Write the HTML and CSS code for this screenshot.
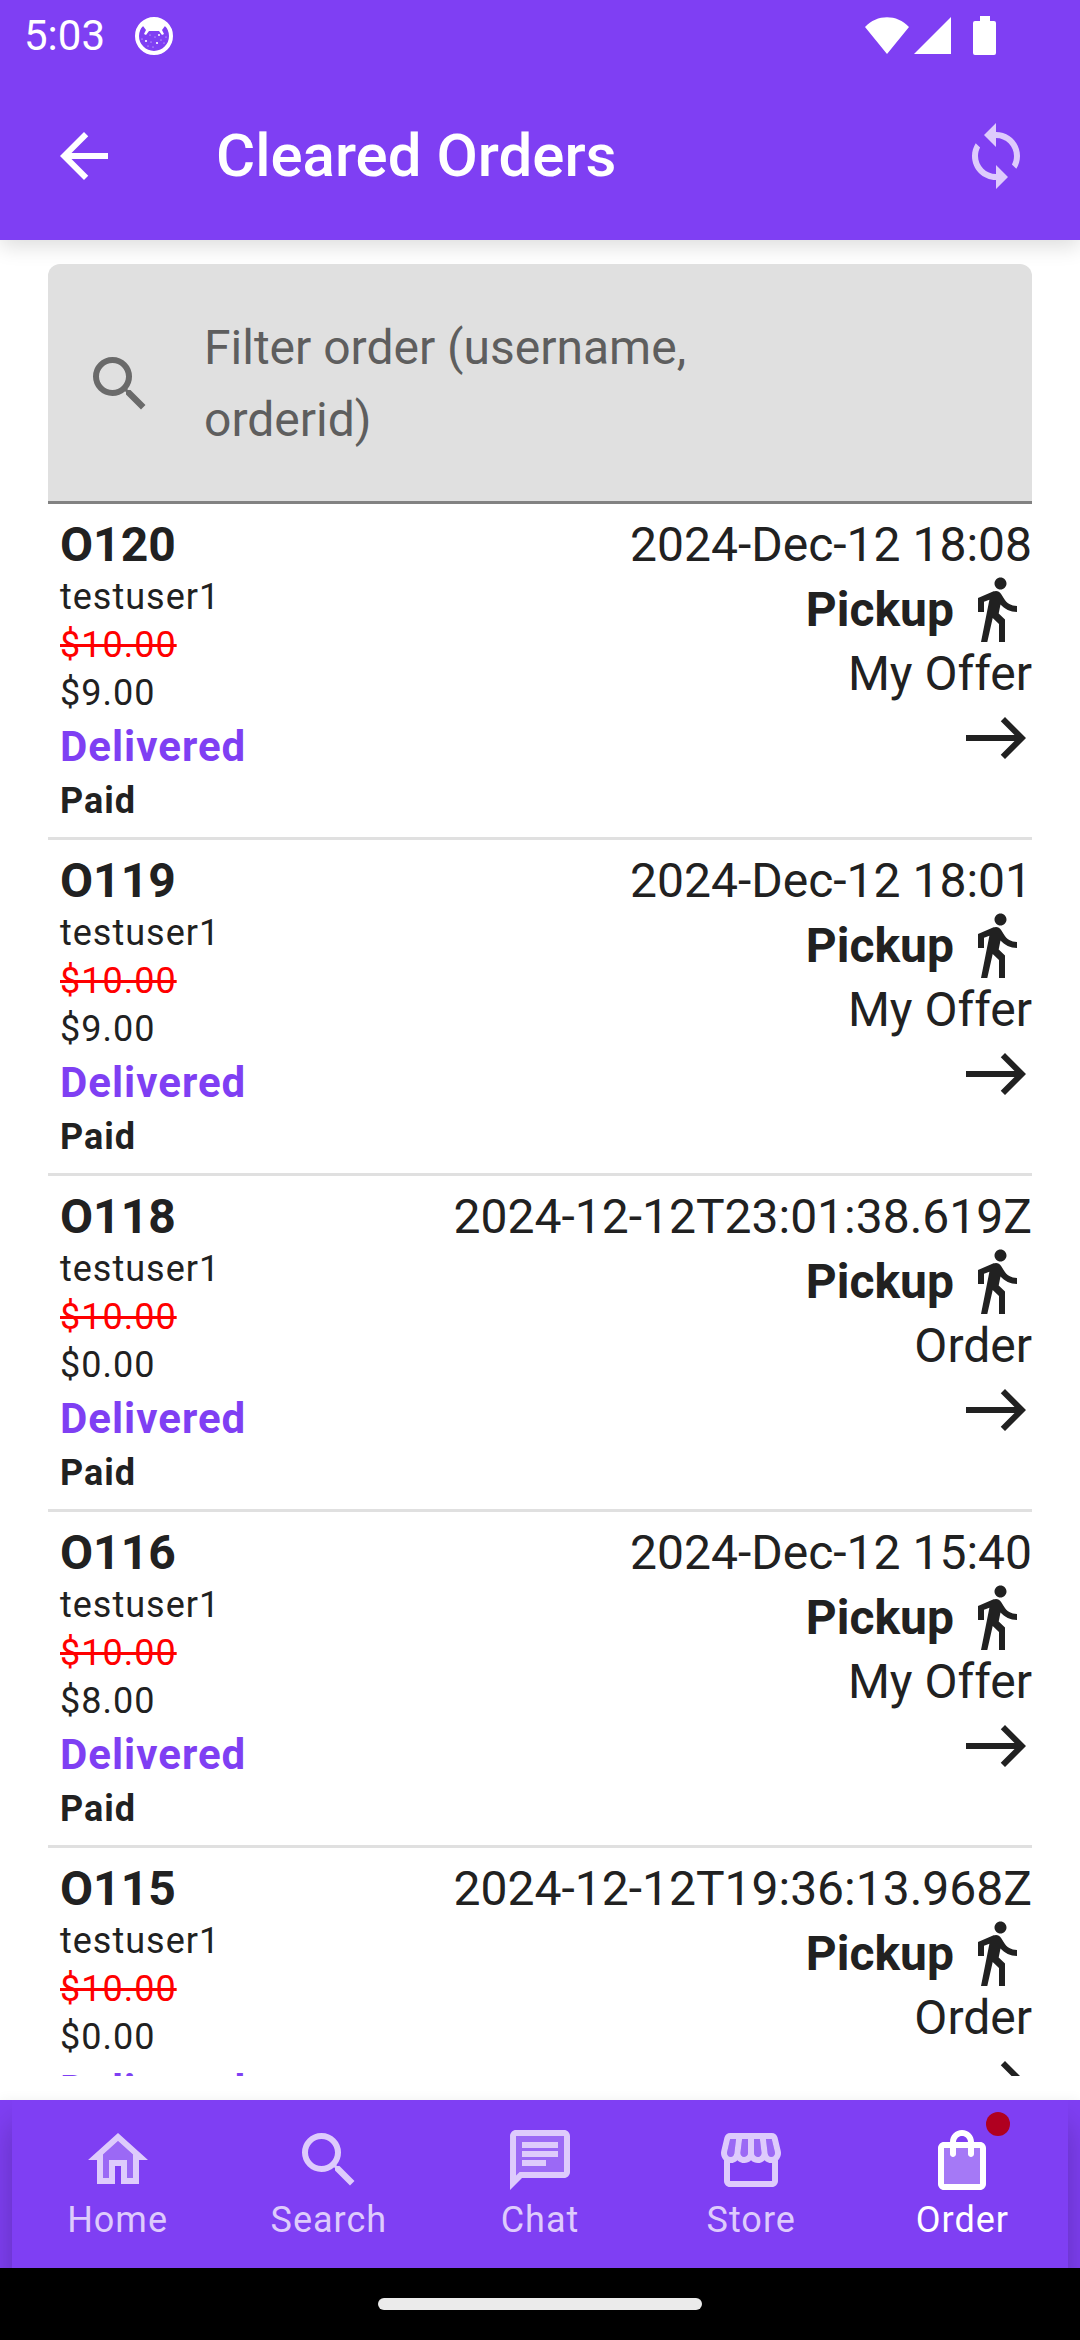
FILE: index.html
```html
<!DOCTYPE html>
<html lang="en">
<head>
<meta charset="utf-8">
<meta name="viewport" content="width=device-width">
<title>Cleared Orders</title>
<link rel="stylesheet" href="styles.css">
</head>
<body>
<svg class="sprite" aria-hidden="true">
  <symbol id="walk" viewBox="0 0 24 24"><path d="M13.5 5.5c1.1 0 2-.9 2-2s-.9-2-2-2-2 .9-2 2 .9 2 2 2zM9.8 8.9L7 23h2.1l1.8-8 2.1 2v6h2v-7.5l-2.1-2 .6-3C14.8 12 16.8 13 19 13v-2c-1.9 0-3.5-1-4.3-2.4l-1-1.6c-.4-.6-1-1-1.7-1-.3 0-.5.1-.8.1L6 8.3V13h2V9.6l1.8-.7"/></symbol>
  <symbol id="east" viewBox="0 0 24 24"><path d="M15 5l-1.41 1.41L18.17 11H2v2h16.17l-4.59 4.59L15 19l7-7-7-7z"/></symbol>
  <symbol id="search" viewBox="0 0 24 24"><path d="M15.5 14h-.79l-.28-.27A6.471 6.471 0 0 0 16 9.5 6.5 6.5 0 1 0 9.5 16c1.61 0 3.09-.59 4.23-1.57l.27.28v.79l5 4.99L20.49 19l-4.99-5zm-6 0C7.01 14 5 11.99 5 9.5S7.01 5 9.5 5 14 7.01 14 9.5 11.99 14 9.5 14z"/></symbol>
</svg>
<div class="app">
  <header class="header">
    <div class="status">
      <span class="clock">5:03</span>
      <svg class="status-icon" viewBox="0 0 38 38" aria-hidden="true">
        <circle cx="19" cy="19" r="17" fill="none" stroke="currentColor" stroke-width="4"/>
        <path d="M4 12l4-3 3 4-2 4 2 1 3-4h10l3 4 2-1-2-4 3-4 4 3C31 5 25 2 19 2S7 5 4 12z"/>
        <g><circle cx="11" cy="24" r="1.1"/><circle cx="24" cy="18" r="1"/><circle cx="22" cy="26" r="1.1"/><circle cx="15" cy="18" r=".5"/><circle cx="16" cy="25" r=".5"/><circle cx="13" cy="29" r=".5"/><circle cx="18" cy="30" r=".5"/><circle cx="26" cy="23" r=".5"/><circle cx="29" cy="26" r=".5"/><circle cx="31" cy="20" r=".5"/><circle cx="7" cy="22" r=".5"/><circle cx="20" cy="20" r=".5"/></g>
      </svg>
      <svg class="signals" viewBox="0 0 132 40" aria-hidden="true">
        <path d="M1 11C13-2 33-2 45 11L23 38zM50 38h37V1zM109 5h7V0h10v5h4q2 0 2 2v30q0 2-2 2h-19q-2 0-2-2V7q0-2 2-2z"/>
      </svg>
    </div>
    <div class="toolbar">
      <button class="icon-button" type="button" aria-label="Back"><svg class="icon" viewBox="0 0 24 24"><path d="M20 11H7.83l5.59-5.59L12 4l-8 8 8 8 1.41-1.41L7.83 13H20v-2z"/></svg></button>
      <h1 class="title">Cleared Orders</h1>
      <button class="icon-button muted" type="button" aria-label="Sync"><svg class="icon" viewBox="0 0 24 24"><path d="M12 4V1L8 5l4 4V6c3.31 0 6 2.69 6 6 0 1.01-.25 1.97-.7 2.8l1.46 1.46C19.54 15.03 20 13.57 20 12c0-4.42-3.58-8-8-8zm0 14c-3.31 0-6-2.69-6-6 0-1.01.25-1.97.7-2.8L5.24 7.74C4.46 8.97 4 10.43 4 12c0 4.42 3.58 8 8 8v3l4-4-4-4v3z"/></svg></button>
    </div>
  </header>

  <main class="main">
    <label class="filter">
      <svg class="icon" role="img" aria-label="Filter"><use href="#search"/></svg>
      <textarea class="filter-input" rows="2" placeholder="Filter order (username, orderid)"></textarea>
    </label>
    <ul class="orders">
      <li class="order">
        <div class="info"><h2 class="number">O120</h2><span class="caption">testuser1</span><del class="caption old-price">$10.00</del><span class="caption">$9.00</span><strong class="state">Delivered</strong><strong class="caption">Paid</strong></div>
        <div class="details"><span class="line">2024-Dec-12 18:08</span><span class="method"><strong>Pickup</strong><svg class="icon"><use href="#walk"/></svg></span><span class="line">My Offer</span><a class="open" href="#o120" aria-label="Open order O120"><svg class="icon"><use href="#east"/></svg></a></div>
      </li>
      <li class="order">
        <div class="info"><h2 class="number">O119</h2><span class="caption">testuser1</span><del class="caption old-price">$10.00</del><span class="caption">$9.00</span><strong class="state">Delivered</strong><strong class="caption">Paid</strong></div>
        <div class="details"><span class="line">2024-Dec-12 18:01</span><span class="method"><strong>Pickup</strong><svg class="icon"><use href="#walk"/></svg></span><span class="line">My Offer</span><a class="open" href="#o119" aria-label="Open order O119"><svg class="icon"><use href="#east"/></svg></a></div>
      </li>
      <li class="order">
        <div class="info"><h2 class="number">O118</h2><span class="caption">testuser1</span><del class="caption old-price">$10.00</del><span class="caption">$0.00</span><strong class="state">Delivered</strong><strong class="caption">Paid</strong></div>
        <div class="details"><span class="line">2024-12-12T23:01:38.619Z</span><span class="method"><strong>Pickup</strong><svg class="icon"><use href="#walk"/></svg></span><span class="line">Order</span><a class="open" href="#o118" aria-label="Open order O118"><svg class="icon"><use href="#east"/></svg></a></div>
      </li>
      <li class="order">
        <div class="info"><h2 class="number">O116</h2><span class="caption">testuser1</span><del class="caption old-price">$10.00</del><span class="caption">$8.00</span><strong class="state">Delivered</strong><strong class="caption">Paid</strong></div>
        <div class="details"><span class="line">2024-Dec-12 15:40</span><span class="method"><strong>Pickup</strong><svg class="icon"><use href="#walk"/></svg></span><span class="line">My Offer</span><a class="open" href="#o116" aria-label="Open order O116"><svg class="icon"><use href="#east"/></svg></a></div>
      </li>
      <li class="order">
        <div class="info"><h2 class="number">O115</h2><span class="caption">testuser1</span><del class="caption old-price">$10.00</del><span class="caption">$0.00</span><strong class="state">Delivered</strong><strong class="caption">Paid</strong></div>
        <div class="details"><span class="line">2024-12-12T19:36:13.968Z</span><span class="method"><strong>Pickup</strong><svg class="icon"><use href="#walk"/></svg></span><span class="line">Order</span><a class="open" href="#o115" aria-label="Open order O115"><svg class="icon"><use href="#east"/></svg></a></div>
      </li>
    </ul>
  </main>

  <nav class="nav">
    <div class="tabs">
      <a class="tab" href="#home"><svg class="icon" viewBox="0 0 24 24"><path opacity=".3" d="M12 5.69l5 4.5V18h-2v-6H9v6H7v-7.81z"/><path d="M12 3L2 12h3v8h6v-6h2v6h6v-8h3L12 3zm5 15h-2v-6H9v6H7v-7.81l5-4.5 5 4.5V18z"/></svg>Home</a>
      <a class="tab" href="#search-tab"><svg class="icon"><use href="#search"/></svg>Search</a>
      <a class="tab" href="#chat"><svg class="icon" viewBox="0 0 24 24"><path opacity=".3" d="M4 17.17L5.17 16H20V4H4v13.17zM6 6h12v2H6V6zm0 3h12v2H6V9zm0 3h8v2H6v-2z" fill-rule="evenodd"/><path d="M20 18c1.1 0 2-.9 2-2V4c0-1.1-.9-2-2-2H4c-1.1 0-1.99.9-1.99 2L2 22l4-4h14zM4 17.17V4h16v12H5.17L4 17.17zM6 12h8v2H6zm0-3h12v2H6zm0-3h12v2H6z" fill-rule="evenodd"/></svg>Chat</a>
      <a class="tab" href="#store"><svg class="icon" viewBox="0 0 24 24"><path opacity=".3" d="M18.91 4.99l1.05 4.37c.1.42.01.84-.25 1.17-.14.18-.44.47-.94.47-.61 0-1.14-.49-1.21-1.14L16.98 5zM13 5h1.96l.54 4.52c.05.39-.07.78-.33 1.07-.22.26-.54.41-.95.41-.67 0-1.22-.59-1.22-1.31zM8.49 9.52L9.04 5H11v4.69c0 .72-.55 1.31-1.29 1.31-.34 0-.65-.15-.89-.41-.25-.29-.37-.68-.33-1.07zM4.04 9.36L5.05 5h1.97l-.58 4.86c-.08.65-.6 1.14-1.21 1.14-.49 0-.8-.29-.93-.47-.27-.32-.36-.75-.26-1.17z"/><path d="M21.9 8.89l-1.05-4.37c-.22-.9-1-1.52-1.91-1.52H5.05c-.9 0-1.69.63-1.9 1.52L2.1 8.89c-.24 1.02-.02 2.06.62 2.88.08.11.19.19.28.29V19c0 1.1.9 2 2 2h14c1.1 0 2-.9 2-2v-6.94c.09-.09.2-.18.28-.28.64-.82.87-1.87.62-2.89zm-2.99-3.9l1.05 4.37c.1.42.01.84-.25 1.17-.14.18-.44.47-.94.47-.61 0-1.14-.49-1.21-1.14L16.98 5l1.93-.01zM13 5h1.96l.54 4.52c.05.39-.07.78-.33 1.07-.22.26-.54.41-.95.41-.67 0-1.22-.59-1.22-1.31V5zM8.49 9.52L9.04 5H11v4.69c0 .72-.55 1.31-1.29 1.31-.34 0-.65-.15-.89-.41-.25-.29-.37-.68-.33-1.07zm-4.45-.16L5.05 5h1.97l-.58 4.86c-.08.65-.6 1.14-1.21 1.14-.49 0-.8-.29-.93-.47-.27-.32-.36-.75-.26-1.17zM5 19v-6.03c.08.01.15.03.23.03.87 0 1.66-.36 2.24-.95.6.6 1.4.95 2.31.95.87 0 1.65-.36 2.23-.93.59.57 1.39.93 2.29.93.84 0 1.64-.35 2.24-.95.58.59 1.37.95 2.24.95.08 0 .15-.02.23-.03V19H5z"/></svg>Store</a>
      <a class="tab active" href="#order" aria-current="page"><span class="badged"><svg class="icon" viewBox="0 0 24 24"><path opacity=".3" d="M18 8H6v12h12z"/><path d="M18 6h-2c0-2.21-1.79-4-4-4S8 3.79 8 6H6c-1.1 0-2 .9-2 2v12c0 1.1.9 2 2 2h12c1.1 0 2-.9 2-2V8c0-1.1-.9-2-2-2zm-6-2c1.1 0 2 .9 2 2h-4c0-1.1.9-2 2-2zm6 16H6V8h2v2c0 .55.45 1 1 1s1-.45 1-1V8h4v2c0 .55.45 1 1 1s1-.45 1-1V8h2v12z"/></svg><span class="badge"></span></span>Order</a>
    </div>
  </nav>
  <div class="gesture"><span class="pill"></span></div>
</div>
</body>
</html>
```
FILE: styles.css
```css
* {
  box-sizing: border-box;
}

body {
  margin: 0;
  background: #fff;
  color: #212121;
  font-family: Roboto, "Liberation Sans", sans-serif;
}

svg {
  display: block;
  flex: none;
  fill: currentColor;
}

.sprite {
  display: none;
}

.icon {
  width: 72px;
  height: 72px;
}

.app {
  display: flex;
  flex-direction: column;
  height: 100vh;
}

.header {
  background: #7f3ff3;
  color: #fff;
  box-shadow: 0 6px 20px rgba(0, 0, 0, 0.14);
}

.status {
  display: flex;
  align-items: center;
  height: 72px;
  padding: 0 84px 0 24px;
}

.clock {
  font-size: 42px;
  line-height: 72px;
}

.status-icon {
  width: 38px;
  height: 38px;
  margin-left: 30px;
}

.signals {
  width: 132px;
  height: 40px;
  margin-left: auto;
}

.toolbar {
  display: flex;
  align-items: center;
  height: 168px;
  padding: 0 48px;
}

.icon-button {
  padding: 0;
  border: 0;
  background: none;
  color: inherit;
}

.muted {
  color: #decbfc;
}

.title {
  flex: 1;
  margin: 0;
  padding-left: 96px;
  font-size: 60px;
  line-height: 72px;
  font-weight: 500;
}

.main {
  display: flex;
  flex: 1;
  flex-direction: column;
  min-height: 0;
  padding: 24px 48px;
}

.filter {
  display: flex;
  flex: none;
  align-items: center;
  gap: 48px;
  padding: 48px 204px 45px 36px;
  border-bottom: 3px solid #828282;
  border-radius: 12px 12px 0 0;
  background: #e0e0e0;
  color: #6a6a6a;
}

.filter-input {
  flex: 1;
  min-width: 0;
  padding: 0;
  border: 0;
  outline: 0;
  background: none;
  color: #212121;
  font: 48px/72px Roboto, "Liberation Sans", sans-serif;
  resize: none;
  overflow: hidden;
}

.filter-input::placeholder {
  color: #5e5e5e;
}

.orders {
  flex: 1;
  min-height: 0;
  margin: 0;
  padding: 0;
  overflow-y: auto;
  list-style: none;
  scrollbar-width: none;
}

.order {
  display: flex;
  justify-content: space-between;
  padding: 12px 0 12px 12px;
  border-bottom: 3px solid #e0e0e0;
}

.info,
.details {
  display: flex;
  flex-direction: column;
  align-items: flex-start;
}

.details {
  align-items: flex-end;
}

.number,
.line,
.method {
  margin: 0;
  font-size: 48px;
  line-height: 57px;
}

.caption {
  font-size: 36px;
  line-height: 48px;
  letter-spacing: 1px;
}

.old-price {
  color: #f00;
}

.state {
  color: #7f3ff3;
  font-size: 42px;
  line-height: 60px;
  letter-spacing: 1px;
}

.method {
  display: flex;
  align-items: center;
  gap: 6px;
}

.open {
  color: inherit;
}

.nav {
  padding: 0 12px;
  overflow: hidden;
  background: #7f3ff3;
  box-shadow: 0 0 12px rgba(0, 0, 0, 0.06);
}

.tabs {
  display: flex;
  padding: 24px 0;
  box-shadow: 0 24px 30px rgba(0, 0, 0, 0.24);
}

.tab {
  display: flex;
  flex: 1;
  flex-direction: column;
  align-items: center;
  color: #decbfc;
  font-size: 36px;
  line-height: 48px;
  letter-spacing: 1px;
  text-decoration: none;
}

.active {
  color: #fff;
}

.badged {
  position: relative;
}

.badge {
  position: absolute;
  top: -12px;
  right: -12px;
  width: 24px;
  height: 24px;
  border-radius: 50%;
  background: #b00020;
}

.gesture {
  display: flex;
  align-items: center;
  justify-content: center;
  height: 72px;
  background: #000;
}

.pill {
  width: 30%;
  height: 12px;
  border-radius: 6px;
  background: #ebebeb;
}
```
